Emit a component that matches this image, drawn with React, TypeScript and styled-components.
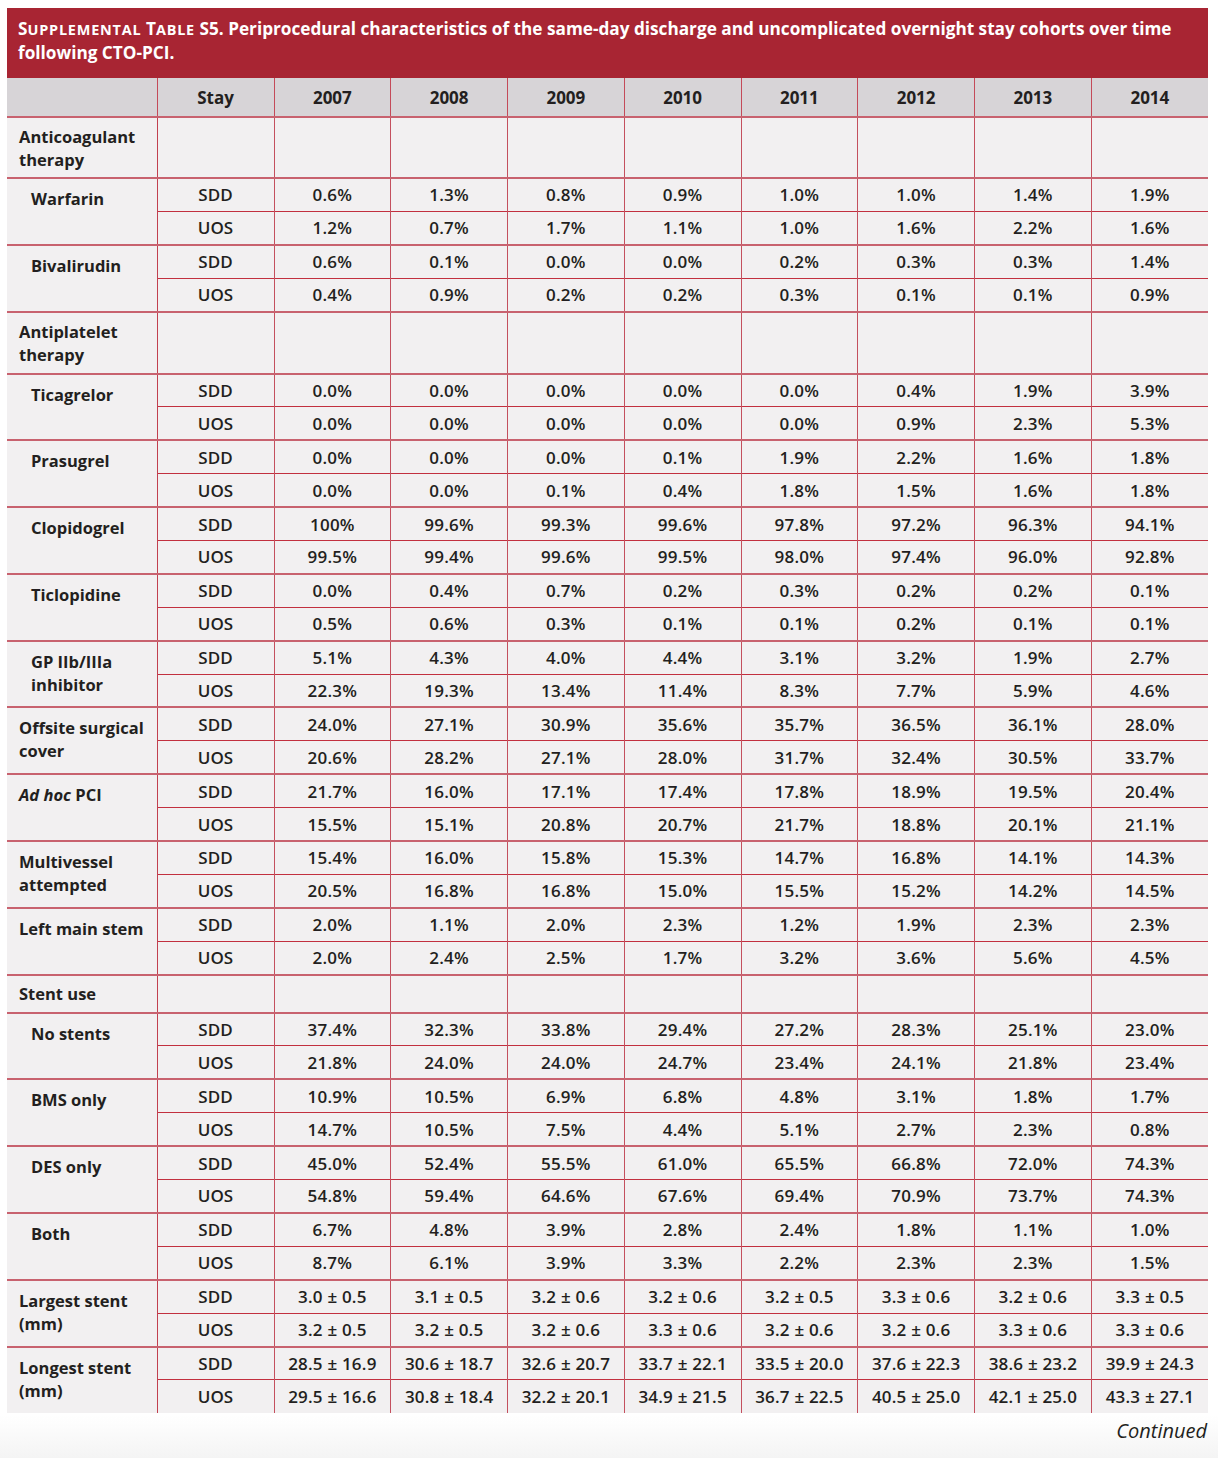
import React from "react";
import styled, { createGlobalStyle } from "styled-components";

const GlobalStyle = createGlobalStyle`
  html, body {
    margin: 0;
    padding: 0;
  }
  body {
    min-height: 1458px;
    background: linear-gradient(to bottom, #ffffff 0px, #ffffff 1415px, #f4f4f4 1458px);
    font-family: "Open Sans", Lato, "Liberation Sans", sans-serif;
    color: #231f20;
  }
`;

const Page = styled.div`
  padding: 8px 10px 0 7px;
  width: 1201px;
`;

const TitleBar = styled.div`
  background: #a82533;
  color: #ffffff;
  font-weight: 700;
  font-size: 17.2px;
  line-height: 23px;
  padding: 9px 11px 0 11px;
  height: 70px;
  box-sizing: border-box;
`;

const SmallCap = styled.span`
  font-size: 0.84em;
  text-transform: uppercase;
  letter-spacing: 0.8px;
`;

const Table = styled.table`
  border-collapse: collapse;
  table-layout: fixed;
  width: 1201px;
  background: #f2f0f1;
`;

const HeadRow = styled.tr`
  background: #d7d4d7;
  height: 39px;
`;

const HeadCell = styled.th`
  font-weight: 700;
  font-size: 17px;
  text-align: center;
  padding: 0;
  border-left: 1px solid #c44a59;
  border-bottom: 1px solid #c56d79;
  &:first-child {
    border-left: none;
  }
`;

const BodyRow = styled.tr<{ $group?: boolean; $height: number }>`
  height: ${(p) => p.$height}px;
  border-top: ${(p) => (p.$group ? "2px solid #c8626f" : "1px solid #c2303f")};
`;

const LabelCell = styled.td<{ $indent?: boolean; $center?: boolean }>`
  font-weight: 700;
  font-size: 16.5px;
  line-height: 23px;
  padding: ${(p) => (p.$center ? "0" : "8px")} 4px 0 ${(p) => (p.$indent ? "24px" : "12px")};
  vertical-align: ${(p) => (p.$center ? "middle" : "top")};
  text-align: left;
`;

const StayCell = styled.td`
  font-size: 17px;
  font-weight: 550;
  text-align: center;
  padding: 0;
  border-left: 1px solid #c2404f;
`;

const ValueCell = styled.td`
  font-size: 17px;
  font-weight: 620;
  text-align: center;
  padding: 0;
  border-left: 1px solid #c4505e;
  letter-spacing: 0.2px;
`;

const Footer = styled.div`
  text-align: right;
  font-style: italic;
  font-size: 20px;
  line-height: 24px;
  padding-top: 6px;
  padding-right: 1px;
`;

type Pair = {
  label: React.ReactNode;
  indent?: boolean;
  sdd: string[];
  uos: string[];
};

type Section = { section: React.ReactNode; height: number };

type Item = Pair | Section;

const pct = (arr: string[]) => arr.map((v) => (v.includes("±") || v.endsWith("%") ? v : v + "%"));

const items: Item[] = [
  { section: <>Anticoagulant<br />therapy</>, height: 61 },
  {
    label: "Warfarin",
    indent: true,
    sdd: pct(["0.6", "1.3", "0.8", "0.9", "1.0", "1.0", "1.4", "1.9"]),
    uos: pct(["1.2", "0.7", "1.7", "1.1", "1.0", "1.6", "2.2", "1.6"]),
  },
  {
    label: "Bivalirudin",
    indent: true,
    sdd: pct(["0.6", "0.1", "0.0", "0.0", "0.2", "0.3", "0.3", "1.4"]),
    uos: pct(["0.4", "0.9", "0.2", "0.2", "0.3", "0.1", "0.1", "0.9"]),
  },
  { section: <>Antiplatelet<br />therapy</>, height: 62 },
  {
    label: "Ticagrelor",
    indent: true,
    sdd: pct(["0.0", "0.0", "0.0", "0.0", "0.0", "0.4", "1.9", "3.9"]),
    uos: pct(["0.0", "0.0", "0.0", "0.0", "0.0", "0.9", "2.3", "5.3"]),
  },
  {
    label: "Prasugrel",
    indent: true,
    sdd: pct(["0.0", "0.0", "0.0", "0.1", "1.9", "2.2", "1.6", "1.8"]),
    uos: pct(["0.0", "0.0", "0.1", "0.4", "1.8", "1.5", "1.6", "1.8"]),
  },
  {
    label: "Clopidogrel",
    indent: true,
    sdd: pct(["100", "99.6", "99.3", "99.6", "97.8", "97.2", "96.3", "94.1"]),
    uos: pct(["99.5", "99.4", "99.6", "99.5", "98.0", "97.4", "96.0", "92.8"]),
  },
  {
    label: "Ticlopidine",
    indent: true,
    sdd: pct(["0.0", "0.4", "0.7", "0.2", "0.3", "0.2", "0.2", "0.1"]),
    uos: pct(["0.5", "0.6", "0.3", "0.1", "0.1", "0.2", "0.1", "0.1"]),
  },
  {
    label: <>GP IIb/IIIa<br />inhibitor</>,
    indent: true,
    sdd: pct(["5.1", "4.3", "4.0", "4.4", "3.1", "3.2", "1.9", "2.7"]),
    uos: pct(["22.3", "19.3", "13.4", "11.4", "8.3", "7.7", "5.9", "4.6"]),
  },
  {
    label: <>Offsite surgical<br />cover</>,
    sdd: pct(["24.0", "27.1", "30.9", "35.6", "35.7", "36.5", "36.1", "28.0"]),
    uos: pct(["20.6", "28.2", "27.1", "28.0", "31.7", "32.4", "30.5", "33.7"]),
  },
  {
    label: <><i>Ad hoc</i> PCI</>,
    sdd: pct(["21.7", "16.0", "17.1", "17.4", "17.8", "18.9", "19.5", "20.4"]),
    uos: pct(["15.5", "15.1", "20.8", "20.7", "21.7", "18.8", "20.1", "21.1"]),
  },
  {
    label: <>Multivessel<br />attempted</>,
    sdd: pct(["15.4", "16.0", "15.8", "15.3", "14.7", "16.8", "14.1", "14.3"]),
    uos: pct(["20.5", "16.8", "16.8", "15.0", "15.5", "15.2", "14.2", "14.5"]),
  },
  {
    label: "Left main stem",
    sdd: pct(["2.0", "1.1", "2.0", "2.3", "1.2", "1.9", "2.3", "2.3"]),
    uos: pct(["2.0", "2.4", "2.5", "1.7", "3.2", "3.6", "5.6", "4.5"]),
  },
  { section: "Stent use", height: 38 },
  {
    label: "No stents",
    indent: true,
    sdd: pct(["37.4", "32.3", "33.8", "29.4", "27.2", "28.3", "25.1", "23.0"]),
    uos: pct(["21.8", "24.0", "24.0", "24.7", "23.4", "24.1", "21.8", "23.4"]),
  },
  {
    label: "BMS only",
    indent: true,
    sdd: pct(["10.9", "10.5", "6.9", "6.8", "4.8", "3.1", "1.8", "1.7"]),
    uos: pct(["14.7", "10.5", "7.5", "4.4", "5.1", "2.7", "2.3", "0.8"]),
  },
  {
    label: "DES only",
    indent: true,
    sdd: pct(["45.0", "52.4", "55.5", "61.0", "65.5", "66.8", "72.0", "74.3"]),
    uos: pct(["54.8", "59.4", "64.6", "67.6", "69.4", "70.9", "73.7", "74.3"]),
  },
  {
    label: "Both",
    indent: true,
    sdd: pct(["6.7", "4.8", "3.9", "2.8", "2.4", "1.8", "1.1", "1.0"]),
    uos: pct(["8.7", "6.1", "3.9", "3.3", "2.2", "2.3", "2.3", "1.5"]),
  },
  {
    label: <>Largest stent<br />(mm)</>,
    sdd: ["3.0 ± 0.5", "3.1 ± 0.5", "3.2 ± 0.6", "3.2 ± 0.6", "3.2 ± 0.5", "3.3 ± 0.6", "3.2 ± 0.6", "3.3 ± 0.5"],
    uos: ["3.2 ± 0.5", "3.2 ± 0.5", "3.2 ± 0.6", "3.3 ± 0.6", "3.2 ± 0.6", "3.2 ± 0.6", "3.3 ± 0.6", "3.3 ± 0.6"],
  },
  {
    label: <>Longest stent<br />(mm)</>,
    sdd: ["28.5 ± 16.9", "30.6 ± 18.7", "32.6 ± 20.7", "33.7 ± 22.1", "33.5 ± 20.0", "37.6 ± 22.3", "38.6 ± 23.2", "39.9 ± 24.3"],
    uos: ["29.5 ± 16.6", "30.8 ± 18.4", "32.2 ± 20.1", "34.9 ± 21.5", "36.7 ± 22.5", "40.5 ± 25.0", "42.1 ± 25.0", "43.3 ± 27.1"],
  },
];

const years = ["2007", "2008", "2009", "2010", "2011", "2012", "2013", "2014"];

const isSection = (it: Item): it is Section => (it as Section).section !== undefined;

export default function App() {
  return (
    <>
      <GlobalStyle />
      <Page>
        <TitleBar>
          S<SmallCap>upplemental</SmallCap> T<SmallCap>able</SmallCap> S5. Periprocedural
          characteristics of the same-day discharge and uncomplicated overnight stay cohorts over
          time following CTO-PCI.
        </TitleBar>
        <Table>
          <colgroup>
            <col style={{ width: 150 }} />
            <col style={{ width: 117 }} />
            {years.map((y) => (
              <col key={y} style={{ width: 116.75 }} />
            ))}
          </colgroup>
          <thead>
            <HeadRow>
              <HeadCell />
              <HeadCell>Stay</HeadCell>
              {years.map((y) => (
                <HeadCell key={y}>{y}</HeadCell>
              ))}
            </HeadRow>
          </thead>
          <tbody>
            {items.map((it, i) => {
              if (isSection(it)) {
                return (
                  <BodyRow key={i} $group $height={it.height}>
                    <LabelCell $center>{it.section}</LabelCell>
                    <StayCell />
                    {years.map((y) => (
                      <ValueCell key={y} />
                    ))}
                  </BodyRow>
                );
              }
              return (
                <React.Fragment key={i}>
                  <BodyRow $group $height={33.4}>
                    <LabelCell rowSpan={2} $indent={it.indent}>
                      {it.label}
                    </LabelCell>
                    <StayCell>SDD</StayCell>
                    {it.sdd.map((v, j) => (
                      <ValueCell key={j}>{v}</ValueCell>
                    ))}
                  </BodyRow>
                  <BodyRow $height={33.4}>
                    <StayCell>UOS</StayCell>
                    {it.uos.map((v, j) => (
                      <ValueCell key={j}>{v}</ValueCell>
                    ))}
                  </BodyRow>
                </React.Fragment>
              );
            })}
          </tbody>
        </Table>
        <Footer>Continued</Footer>
      </Page>
    </>
  );
}
